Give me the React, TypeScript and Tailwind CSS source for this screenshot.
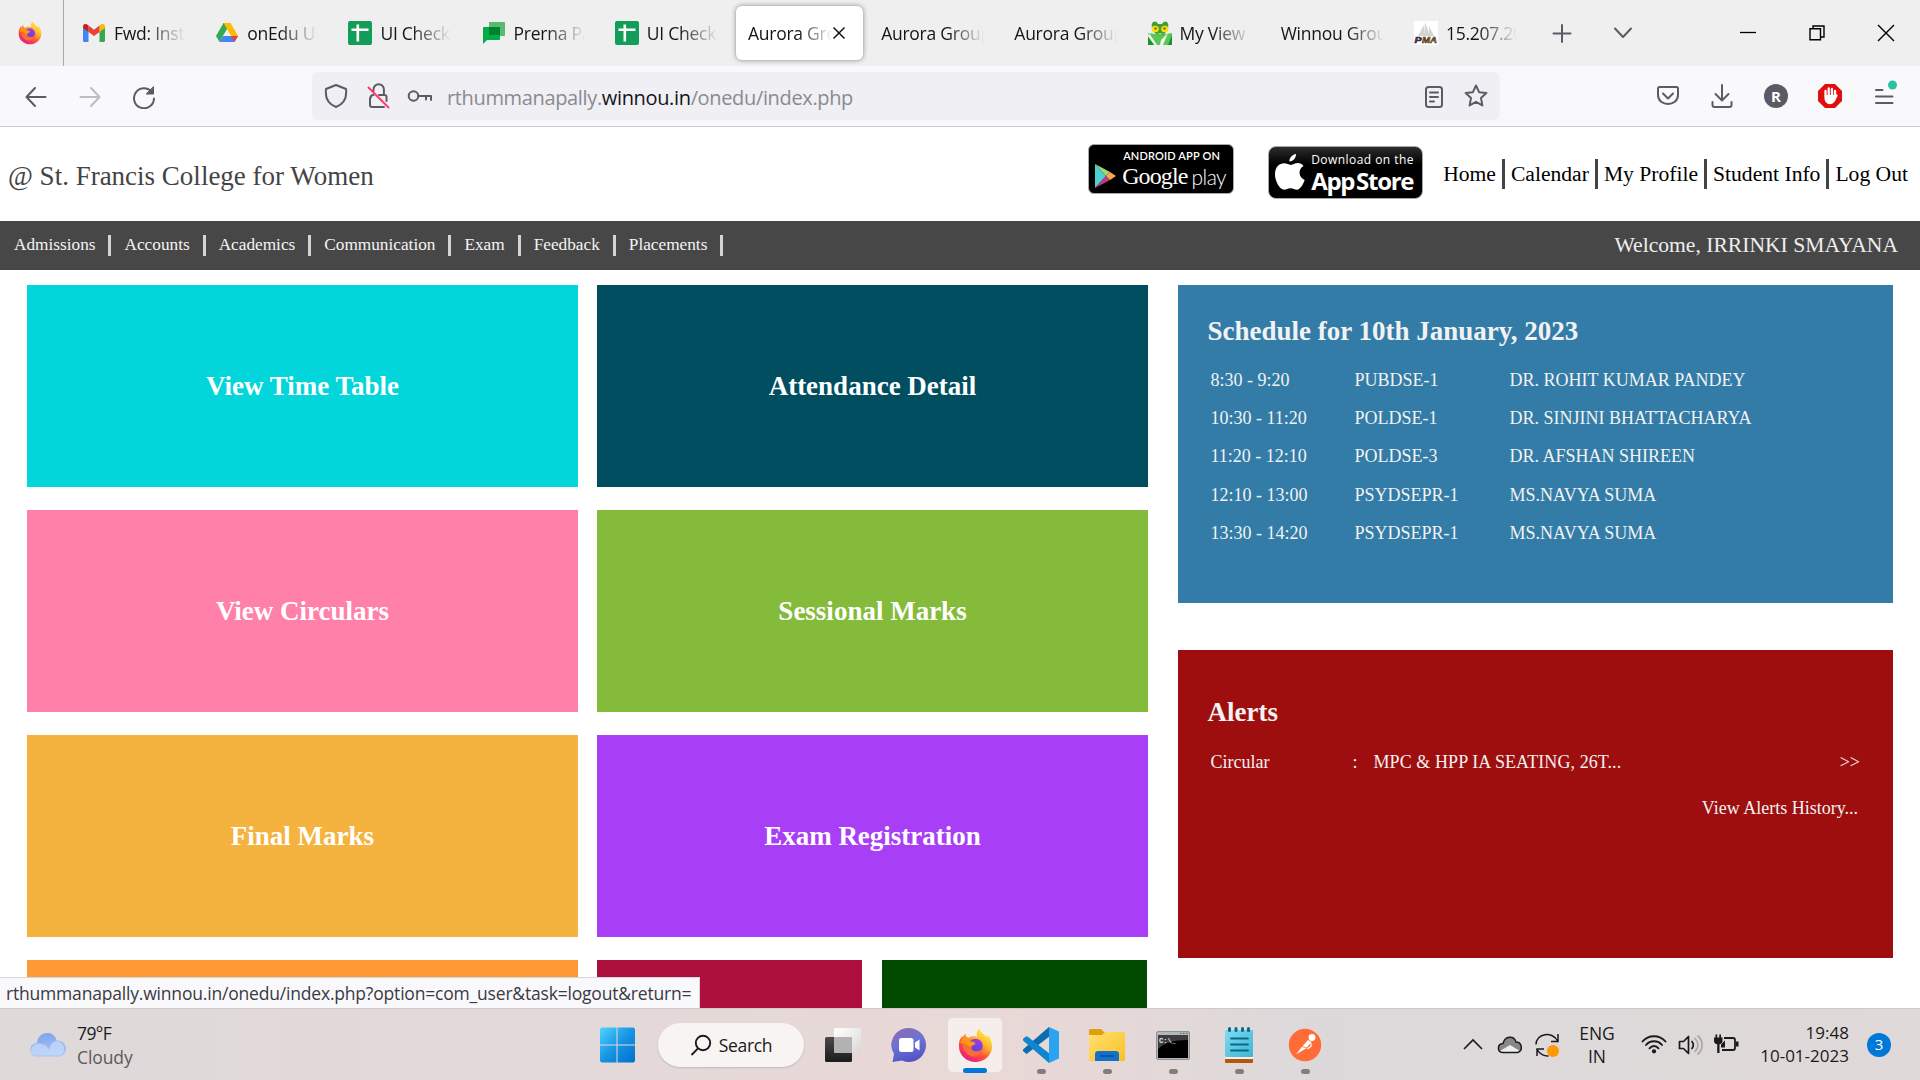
import type { ReactNode } from "react";

const UI = "font-['Open_Sans','Noto_Sans',sans-serif]";

function Firefox({ size, id }: { size: number; id: string }) {
  return (
    <svg width={size} height={size} viewBox="0 0 36 36" className="shrink-0">
      <defs>
        <linearGradient id={id + "a"} x1="0.85" y1="0.05" x2="0.25" y2="1">
          <stop offset="0" stopColor="#fff44f" />
          <stop offset="0.35" stopColor="#ffb330" />
          <stop offset="0.62" stopColor="#ff5634" />
          <stop offset="1" stopColor="#e31587" />
        </linearGradient>
        <linearGradient id={id + "b"} x1="0.8" y1="0" x2="0.3" y2="1">
          <stop offset="0" stopColor="#b833e1" />
          <stop offset="0.5" stopColor="#7542e5" />
          <stop offset="1" stopColor="#4a4fd0" />
        </linearGradient>
        <linearGradient id={id + "c"} x1="0.7" y1="0" x2="0.3" y2="1">
          <stop offset="0" stopColor="#fff44f" />
          <stop offset="0.5" stopColor="#ffc02a" />
          <stop offset="1" stopColor="#ff5a36" />
        </linearGradient>
      </defs>
      <path d="M22 1c-3 3-3 6-2 8-5-2-8 0-9 1-2 0-3-1-3-4-2 1-3 3-3 4-.3-.7-.5-1.400-.5-2C1 12 1 16 1 19c0 9 8 16 17 16s17-7 17-16c0-5-2-9-5-12 .5 1.500.7 2.500.7 3.500C28 7 24 6 22 1z" fill={"url(#" + id + "a)"} />
      <path d="M22 1c-3 3-3 6-2 8 5 1 9 6 8 12-1 4-4 7-8 8 8 0 14-6 14-13 0-3-1-6-4-9 .5 1.500.7 2.500.7 3.500C28 7 24 6 22 1z" fill={"url(#" + id + "c)"} />
      <circle cx="18" cy="18.500" r="7.500" fill={"url(#" + id + "b)"} />
      <path d="M5 15c3-2 6-1 8 0 2-.5 4 0 5 1-1 2-3 2-4 3-1 2 1 5 5 5 2 0 4-1 5-2-1 6-6 8-10 7-5-1-10-7-9-14z" fill="#ff6a3a" />
      <path d="M5 10c3 0 6 1 8 4 1 0 4 0 5 2-2 2-4 1-5 4-3-3-7-5-11-4z" fill="#ff980e" />
    </svg>
  );
}

function Gmail() {
  return (
    <svg width="24" height="24" viewBox="0 0 24 24">
      <path d="M1 6v13.500c0 .8.700 1.500 1.500 1.500H6.500V10.500z" fill="#4285f4" />
      <path d="M23 6v13.500c0 .8-.7 1.500-1.500 1.500H17.500V10.500z" fill="#34a853" />
      <path d="M17.500 4.500v6.500L23 7V5.500c0-2.300-2.500-3-4-2z" fill="#fbbc04" />
      <path d="M6.500 11V4.600L12 8.700l5.500-4.100V11L12 15z" fill="#ea4335" />
      <path d="M1 5.500V7l5.500 4V4.600L5 3.500c-1.500-1-4-.3-4 2z" fill="#c5221f" />
    </svg>
  );
}

function Drive() {
  return (
    <svg width="24" height="24" viewBox="0 0 24 24">
      <path d="M8.500 2h7l-4 7L4.500 21 1 15z" fill="#34a853" />
      <path d="M8.500 2h7L12 8z" fill="#188038" />
      <path d="M15.500 2L23 15h-7L8.500 2z" fill="#fbbc04" />
      <path d="M8 15h15l-3.500 6h-15z" fill="#4285f4" />
      <path d="M16 15h7l-3.500 6z" fill="#ea4335" />
      <path d="M12 8.500l4 6.500H8z" fill="#efeff0" />
    </svg>
  );
}

function Sheet() {
  return (
    <svg width="24" height="24" viewBox="0 0 24 24">
      <rect width="24" height="24" rx="2" fill="#129d58" />
      <path d="M3.500 8.700h17M9.800 3.500v17" stroke="#fff" strokeWidth="2.600" />
    </svg>
  );
}

function ChatIcon() {
  return (
    <svg width="24" height="24" viewBox="0 0 24 24">
      <path d="M7 1h15c.6 0 1 .4 1 1v12c0 .6-.4 1-1 1H7z" fill="#5bb974" />
      <path d="M2 6h15c.6 0 1 .4 1 1v11c0 .6-.4 1-1 1H5l-4 4V7c0-.6.400-1 1-1z" fill="#00ac47" />
      <path d="M7 6h11v8H8c-.6 0-1-.4-1-1z" fill="#00832d" />
    </svg>
  );
}

function Mantis() {
  return (
    <svg width="24" height="24" viewBox="0 0 24 24">
      <path d="M0 12l7 1 4-2h3l4 2 6-1v12H0z" fill="#5ec455" />
      <path d="M0 16l6 8H0zM24 14l-4 10h4z" fill="#17913a" />
      <path d="M1 12l8 12H6.500L0 15zM20 12l-5 12h-3l1-5z" fill="#e9fbe6" />
      <path d="M5 1c3-1.500 4 0 5 2h4c1-2 3-3.500 5-2 2 2 2 8-2 11l-5 3.500L7 12C3 9 3 3 5 1z" fill="#3f9f35" />
      <ellipse cx="7.200" cy="8" rx="3.600" ry="3.200" fill="#f5df17" />
      <ellipse cx="16.800" cy="8" rx="3.600" ry="3.200" fill="#f5df17" />
      <circle cx="7.500" cy="7.500" r="1.200" fill="#8a6a00" />
      <circle cx="16.500" cy="7.500" r="1.200" fill="#8a6a00" />
      <path d="M9 12h6l-3 3z" fill="#7fdc4d" />
    </svg>
  );
}

function Pma() {
  return (
    <svg width="24" height="24" viewBox="0 0 24 24">
      <rect width="24" height="24" fill="#fff" />
      <path d="M4 15L10 4v11zM10 15l1-14 5 14zM15 15V5l5 10z" fill="#d3d3d3" />
      <text x="0.500" y="22" fontSize="8.500" fontWeight="800" fontStyle="italic" fontFamily="Liberation Sans, sans-serif" textLength="7" lengthAdjust="spacingAndGlyphs" fill="#3b3f78" stroke="#222" strokeWidth="0.500">P</text>
      <text x="8" y="22" fontSize="8.500" fontWeight="800" fontStyle="italic" fontFamily="Liberation Sans, sans-serif" textLength="15" lengthAdjust="spacingAndGlyphs" fill="#e98a00" stroke="#222" strokeWidth="0.500">MA</text>
    </svg>
  );
}

type TabInfo = { icon?: ReactNode; label: string; active?: boolean };
const tabs: TabInfo[] = [
  { icon: <Gmail />, label: "Fwd: Inst" },
  { icon: <Drive />, label: "onEdu UI" },
  { icon: <Sheet />, label: "UI Check" },
  { icon: <ChatIcon />, label: "Prerna Pa" },
  { icon: <Sheet />, label: "UI Check" },
  { label: "Aurora Gro", active: true },
  { label: "Aurora Group" },
  { label: "Aurora Group" },
  { icon: <Mantis />, label: "My View" },
  { label: "Winnou Grou" },
  { icon: <Pma />, label: "15.207.20" },
];

function Tab({ icon, label, active }: TabInfo) {
  return (
    <div className="flex h-full w-[133.200px] shrink-0 items-center px-[3px]">
      <div className={active ? "flex h-[54px] w-full items-center rounded-[6px] bg-white pl-3 shadow-[0_0_5px_rgba(0,0,0,0.45)]" : "flex h-[54px] w-full items-center pl-3"}>
        {icon && <span className="mr-[8px] shrink-0">{icon}</span>}
        <span
          className={
            "shrink-0 overflow-hidden whitespace-nowrap text-[17.500px] tracking-[-0.250px] text-[#15141a] " +
            (active
              ? "w-[84px] [mask-image:linear-gradient(to_right,black_60%,transparent)]"
              : icon
                ? "w-[71px] [mask-image:linear-gradient(to_right,black_45%,transparent)]"
                : "w-[103px] [mask-image:linear-gradient(to_right,black_65%,transparent)]")
          }
        >
          {label}
        </span>
        {active && (
          <svg width="14" height="14" viewBox="0 0 14 14" className="shrink-0">
            <path d="M1.500 1.500l11 11M12.500 1.500l-11 11" stroke="#15141a" strokeWidth="1.500" />
          </svg>
        )}
      </div>
    </div>
  );
}

const ico = { fill: "none", stroke: "#5b5b66", strokeWidth: 2, strokeLinecap: "round" as const, strokeLinejoin: "round" as const };

function TabBar() {
  return (
    <div className="flex h-[66px] items-center bg-[#efeff0]">
      <div className="flex h-full w-16 items-center justify-center border-r border-[#a9a9ad] pr-[3px]">
        <Firefox size={24} id="ft" />
      </div>
      <div className="ml-[3px] flex h-full">
        {tabs.map((t, i) => (
          <Tab key={i} {...t} />
        ))}
      </div>
      <svg width="20" height="20" viewBox="0 0 20 20" className="ml-[20px] shrink-0" {...ico}><path d="M10 2v17M1.500 10.500h17" /></svg>
      <svg width="20" height="20" viewBox="0 0 20 20" className="ml-[41px] shrink-0" {...ico}><path d="M2 5.500l8 8.500 8-8.500" /></svg>
      <div className="ml-auto mr-[25px] flex items-center gap-[53px]">
        <svg width="16" height="16" viewBox="0 0 16 16"><path d="M0 7.500h16" stroke="#000" strokeWidth="1.300" /></svg>
        <svg width="16" height="16" viewBox="0 0 16 16" fill="none" stroke="#000" strokeWidth="1.400"><path d="M1 3.800h10.500v11H1zM4 3.500V1h11v11h-3" /></svg>
        <svg width="18" height="18" viewBox="0 0 18 18" className="-ml-px"><path d="M1 1l16 16M17 1L1 17" stroke="#000" strokeWidth="1.400" /></svg>
      </div>
    </div>
  );
}

function AddressBar() {
  return (
    <div className="flex h-[61px] items-center border-b border-[#ccccd1] bg-[#f9f9fb]">
      <div className="flex w-[312px] items-center pl-[24px] pt-px">
        <svg width="24" height="24" viewBox="0 0 24 24" {...ico}><path d="M21.500 12H2.500M11 3L2.500 12l8.500 9" /></svg>
        <svg width="24" height="24" viewBox="0 0 24 24" className="ml-[30px]" {...ico} stroke="#bdbdc2"><path d="M2.500 12h19M13 3l8.500 9-8.500 9" /></svg>
        <svg width="24" height="24" viewBox="0 0 24 24" className="ml-[30px]" {...ico}><path d="M20.500 8A10 10 0 1 0 22 13.500" /><path d="M21.500 2v7h-7z" fill="#5b5b66" stroke="#5b5b66" strokeWidth="1" /></svg>
      </div>
      <div className="flex h-12 w-[1188px] items-center rounded-[6px] bg-[#f0f0f4] pl-[12px] pr-[11px]">
        <svg width="24" height="26" viewBox="0 0 24 26" {...ico}><path d="M12 2l10 4c1 8-2 15-10 18C4 21 1 14 2 6z" /></svg>
        <svg width="24" height="26" viewBox="0 0 24 26" className="ml-[18px]" {...ico}><path d="M7.500 8V6.500a5.200 5.200 0 0 1 10.400 0V12M4.500 15c0-2 1-3 3-3M13 12h5.500c1.200 0 2 .8 2 2v4M4 15v7c0 1.200.8 2 2 2h12" /><path d="M2.500 4.500l20 20" stroke="#ff3b6b" /></svg>
        <svg width="26" height="16" viewBox="0 0 26 16" className="ml-[17px]" {...ico}><circle cx="6.500" cy="8" r="4.800" /><path d="M11.500 8H24v4M19 8v3.500" /></svg>
        <span className="ml-[14px] whitespace-nowrap pt-[3px] text-[20px] tracking-[-0.350px] text-[#8a8a90]">
          rthummanapally.<span className="text-[#15141a]">winnou.in</span>/onedu/index.php
        </span>
        <svg width="20" height="24" viewBox="0 0 20 24" className="ml-auto mt-px" {...ico}><rect x="2" y="2" width="16" height="20" rx="2.500" /><path d="M6 7.500h8M6 12h8M6 16.500h4" /></svg>
        <svg width="26" height="26" viewBox="0 0 26 26" className="ml-[19px]" {...ico}><path d="M13 2.500l3.100 6.700 7.300.9-5.400 5 1.400 7.300-6.400-3.600-6.400 3.600L8 15.100l-5.400-5 7.300-.9z" /></svg>
      </div>
      <div className="ml-auto mr-[23px] flex items-center">
        <svg width="24" height="24" viewBox="0 0 24 24" {...ico}><path d="M3.500 3h17c.8 0 1.500.7 1.500 1.500V11c0 12-20 12-20 0V4.500C2 3.700 2.700 3 3.500 3z" /><path d="M7 9.500l5 5 5-5" /></svg>
        <svg width="24" height="26" viewBox="0 0 24 26" className="mb-px ml-[30px]" {...ico}><path d="M12 2v15M5.500 11l6.500 6.500 6.500-6.500M2.500 19v3c0 1 .8 2 2 2h15c1.200 0 2-1 2-2v-3" /></svg>
        <span className="ml-[30px] flex h-6 w-6 items-center justify-center rounded-full bg-[#5b5b66] text-[15px] font-bold text-white">R</span>
        <svg width="26" height="26" viewBox="0 0 26 26" className="ml-[29px]">
          <path d="M8 1h10l7 7v10l-7 7H8l-7-7V8z" fill="#e40d0d" />
          <path d="M8.500 14V8M11.700 12V5.500M14.900 12V6M18 13V8M8.500 14c0 4 2 6 4.700 6 3 0 4-2 5-5l1.300-2.500" stroke="#fff" strokeWidth="2.300" strokeLinecap="round" fill="none" />
          <path d="M8 12h10v3c0 3-2 5-5 5s-5-2-5-5z" fill="#fff" />
        </svg>
        <svg width="24" height="30" viewBox="0 0 24 30" className="mb-[6px] ml-[30px]" {...ico}><path d="M3 12h6.500M3 18.500h16.500M3 25h16.500" /><circle cx="19.500" cy="7" r="4.500" fill="#2ac3a2" stroke="none" /></svg>
      </div>
    </div>
  );
}

function PlayBadge() {
  return (
    <div className="mb-[10px] flex h-[50px] w-[146px] items-center rounded-[6px] border border-[#aaa] bg-black pl-[5px] text-white">
      <svg width="23" height="26" viewBox="0 0 23 26" className="mt-[13px] shrink-0">
        <path d="M1 1v24l11-12z" fill="#4dd0d4" />
        <path d="M1 1l11 12 4-4z" fill="#a5d66f" />
        <path d="M1 25l11-12 4 4z" fill="#c2378c" />
        <path d="M12 13l4-4 6 4-6 4z" fill="#f6a94f" />
      </svg>
      <div className="flex flex-col pl-[5px]">
        <span className="whitespace-nowrap pl-px font-['Lato',sans-serif] text-[11px] font-semibold leading-[15px] tracking-[0.150px]">ANDROID APP ON</span>
        <span className="flex items-center whitespace-nowrap leading-[27px]">
          <span className="font-['Liberation_Serif',serif] text-[24px] tracking-[-0.900px]">Google</span>
          <span className="ml-[4px] font-['Lato',sans-serif] text-[21px] font-light tracking-[-0.500px]">play</span>
        </span>
      </div>
    </div>
  );
}

function AppStoreBadge() {
  return (
    <div className="mb-[4px] ml-[34px] flex h-[53px] w-[155px] items-center rounded-[8px] border border-[#a6a6a6] bg-[linear-gradient(#2c2c2c,#000_35%)] pl-[5px] text-white">
      <svg width="32" height="38" viewBox="0 0 32 38" className="shrink-0">
        <path d="M22 1c.3 3-2.500 7.500-6.600 7.600C15 5 18.500 1.400 22 1zM29.500 13c-6 3.500-4.800 11.500 1.200 14C29 32 26 36.500 23 36.700c-2.500.1-3.500-1.500-6.500-1.500s-4 1.500-6.300 1.500C5.500 36.500 1 28 1 21.500 1 14 5.500 10.300 10 10.300c2.800 0 4.800 1.600 6.800 1.600 1.800 0 4-1.800 7-1.800 2.200 0 4.500 1.200 5.700 2.900z" fill="#fff" />
      </svg>
      <div className="flex flex-col pl-[5px] font-['Open_Sans',sans-serif]">
        <span className="whitespace-nowrap text-[12px] leading-[17px] tracking-[0.450px]">Download on the</span>
        <span className="whitespace-nowrap text-[24px] font-bold leading-[25px] tracking-[-1.300px] [word-spacing:-3px]">App Store</span>
      </div>
    </div>
  );
}

const links = ["Home", "Calendar", "My Profile", "Student Info", "Log Out"];
const menu = ["Admissions", "Accounts", "Academics", "Communication", "Exam", "Feedback", "Placements"];

function SiteHeader() {
  return (
    <>
      <header className="flex h-[94px] items-center bg-white">
        <h1 className="ml-[8px] mt-[4px] text-[27px] leading-none text-[#444]">@ St. Francis College for Women</h1>
        <div className="ml-auto flex items-center">
          <PlayBadge />
          <AppStoreBadge />
        </div>
        <nav className="ml-[20px] mr-[12px] flex items-center">
          {links.map((l, i) => (
            <div key={l} className="flex items-center">
              {i > 0 && <span className="mx-[6px] h-[30px] w-[3px] bg-[#444]" />}
              <a className="whitespace-nowrap pt-[2px] text-[21.600px] leading-none text-black">{l}</a>
            </div>
          ))}
        </nav>
      </header>
      <div className="flex h-[49px] items-center bg-[#474747] pl-px text-[#f4f4f4]">
        {menu.map((m) => (
          <div key={m} className="flex items-center pb-px">
            <span className="ml-[13px] text-[17.250px] leading-none">{m}</span>
            <span className="ml-[13px] h-[21px] w-[3px] bg-[#d4d4d4]" />
          </div>
        ))}
        <span className="ml-auto mr-[22px] text-[21.600px] leading-none text-[#eee]">Welcome, IRRINKI SMAYANA</span>
      </div>
    </>
  );
}

const tiles = [
  { t: "View Time Table", c: "bg-[#02d6da]" },
  { t: "Attendance Detail", c: "bg-[#014e60]" },
  { t: "View Circulars", c: "bg-[#ff80a8]" },
  { t: "Sessional Marks", c: "bg-[#84bb3a]" },
  { t: "Final Marks", c: "bg-[#f4b33f]" },
  { t: "Exam Registration", c: "bg-[#a83ef6]" },
];

const schedule = [
  ["8:30 - 9:20", "PUBDSE-1", "DR. ROHIT KUMAR PANDEY"],
  ["10:30 - 11:20", "POLDSE-1", "DR. SINJINI BHATTACHARYA"],
  ["11:20 - 12:10", "POLDSE-3", "DR. AFSHAN SHIREEN"],
  ["12:10 - 13:00", "PSYDSEPR-1", "MS.NAVYA SUMA"],
  ["13:30 - 14:20", "PSYDSEPR-1", "MS.NAVYA SUMA"],
];

function Dashboard() {
  return (
    <main className="flex h-[738px] overflow-hidden bg-white pl-[27px] pt-[15px]">
      <div className="w-[1121px] shrink-0">
        <div className="grid grid-cols-[551px_551px] gap-x-[19px] gap-y-[23px]">
          {tiles.map((x) => (
            <div key={x.t} className={"flex h-[202px] items-center justify-center text-[27px] font-bold text-white " + x.c}>{x.t}</div>
          ))}
        </div>
        <div className="mt-[23px] flex">
          <div className="h-[202px] w-[551px] bg-[#ff9933]" />
          <div className="ml-[19px] h-[202px] w-[265px] bg-[#ad103c]" />
          <div className="ml-[20px] h-[202px] w-[265px] bg-[#004b00]" />
        </div>
      </div>
      <div className="ml-[30px] w-[715px] text-[#f2f2f2]">
        <section className="h-[318px] bg-[#327ca7] pl-[29.500px] pt-[31px]">
          <h2 className="text-[27px] font-bold leading-[31px]">Schedule for 10th January, 2023</h2>
          <div className="mt-[14px] pl-[3px] text-[18px]">
            {schedule.map((r, i) => (
              <div key={i} className="grid h-[38.400px] grid-cols-[144px_155px_1fr] items-center">
                <span>{r[0]}</span>
                <span>{r[1]}</span>
                <span>{r[2]}</span>
              </div>
            ))}
          </div>
        </section>
        <section className="mt-[47px] h-[308px] bg-[#9e0e0e] pl-[29.500px] pr-[33px] pt-[47px]">
          <h2 className="text-[27px] font-bold leading-[31px]">Alerts</h2>
          <div className="mt-[19px] flex h-[30px] items-center pl-[3px] text-[18px]">
            <span className="w-[142px]">Circular</span>
            <span className="w-[21px]">:</span>
            <span className="tracking-[0.080px]">MPC &amp; HPP IA SEATING, 26T...</span>
            <span className="ml-auto">&gt;&gt;</span>
          </div>
          <div className="mt-[16px] flex h-[30px] items-center justify-end pr-[2px] text-[18px]">View Alerts History...</div>
        </section>
      </div>
    </main>
  );
}

function WinLogo() {
  return (
    <svg width="36" height="36" viewBox="0 0 36 36" className="shrink-0">
      <defs>
        <linearGradient id="win" x1="0" y1="0" x2="1" y2="1">
          <stop offset="0" stopColor="#4fd4ff" />
          <stop offset="0.5" stopColor="#1795e3" />
          <stop offset="1" stopColor="#0070cc" />
        </linearGradient>
      </defs>
      <path d="M1.500 0.500h15v17H0V2zM17.500 0.500H33.500L35 2v15.500H17.500zM0 18.500h16.500v17h-15L0 34zM17.500 18.500H35V34l-1.500 1.500h-16z" fill="url(#win)" />
    </svg>
  );
}

function TaskView() {
  return (
    <svg width="36" height="36" viewBox="0 0 36 36">
      <defs>
        <linearGradient id="tv" x1="0" y1="0" x2="0" y2="1"><stop offset="0" stopColor="#4a4a4a" /><stop offset="1" stopColor="#1c1c1c" /></linearGradient>
        <linearGradient id="tw" x1="0" y1="0" x2="1" y2="1"><stop offset="0" stopColor="#fff" /><stop offset="1" stopColor="#d8d8d8" /></linearGradient>
      </defs>
      <rect x="0" y="10" width="27" height="25" rx="1.500" fill="url(#tv)" />
      <rect x="9" y="1" width="27" height="25" rx="1.500" fill="url(#tw)" />
      <path d="M9 10h18v16H10.500L9 24.500z" fill="#b2b2b2" />
    </svg>
  );
}

function TeamsChat() {
  return (
    <svg width="36" height="36" viewBox="0 0 36 36">
      <defs><linearGradient id="tc" x1="0.300" y1="0" x2="0.600" y2="1"><stop offset="0" stopColor="#8a6bb5" /><stop offset="0.450" stopColor="#6a74d4" /><stop offset="1" stopColor="#5350c6" /></linearGradient></defs>
      <path d="M18 1a17 17 0 1 1-7 32.500L1.500 35l1.500-8A17 17 0 0 1 18 1z" fill="url(#tc)" />
      <rect x="8" y="11" width="14.500" height="14" rx="2.500" fill="#fff" />
      <path d="M24 15.500l4.500-3v11l-4.500-3z" fill="#fff" />
    </svg>
  );
}

function VsCode() {
  return (
    <svg width="36" height="36" viewBox="0 0 36 36">
      <path d="M26 0L27 9 3.500 27 0.500 24.500c-.8-.8-.8-1.800 0-2.600z" fill="#0b6cae" />
      <path d="M0.500 11.500l2-1.700c.8-.6 1.600-.5 2.300 0L27 27l-1 9L0.500 14c-.8-.8-.8-1.700 0-2.500z" fill="#0f86cf" />
      <path d="M26 0l10 4.500v27L26 36z" fill="#2aa4f0" />
    </svg>
  );
}

function Folder() {
  return (
    <svg width="36" height="34" viewBox="0 0 36 34">
      <defs><linearGradient id="fo" x1="0" y1="0" x2="1" y2="1"><stop offset="0" stopColor="#ffe074" /><stop offset="1" stopColor="#fcc120" /></linearGradient></defs>
      <path d="M1.500 1H12l3 3H34c1 0 2 1 2 2v6H0V2.500C0 1.600.600 1 1.500 1z" fill="#dfa00b" />
      <path d="M0 7h13l3-3h18c1 0 2 .8 2 2v27H0z" fill="url(#fo)" />
      <path d="M6 33V26c0-2 1.500-3 3-3h18c1.500 0 3 1 3 3v7z" fill="#1370cc" />
      <path d="M11 28h14" stroke="#0a4c95" strokeWidth="1.500" />
    </svg>
  );
}

function Terminal() {
  return (
    <svg width="34" height="29" viewBox="0 0 34 29">
      <rect x="0.500" y="0.500" width="33" height="28" rx="1.500" fill="#b4b8bc" stroke="#8d9195" />
      <rect x="2" y="4" width="30" height="23" fill="#000" />
      <path d="M2 4h30v5C18 9 8 12 2 18z" fill="#3d3d3d" />
      <text x="3" y="11.500" fontSize="7" fontWeight="700" fill="#eee" fontFamily="Liberation Mono, monospace">C:\_</text>
      <path d="M24 2.300h1.500M27 2.300h1.500M30 2.300h1.500" stroke="#555" />
    </svg>
  );
}

function Notepad() {
  return (
    <svg width="28" height="36" viewBox="0 0 28 36">
      <defs><linearGradient id="np" x1="0" y1="0" x2="1" y2="1"><stop offset="0" stopColor="#7fdcf0" /><stop offset="1" stopColor="#3fb3d4" /></linearGradient></defs>
      <rect y="31" width="28" height="5" rx="1" fill="#b4560c" />
      <rect y="28" width="28" height="4" fill="#f4f0ec" />
      <rect y="3" width="28" height="27" rx="1" fill="url(#np)" />
      <path d="M6 11.500h17M6 17.500h17M6 23.500h17" stroke="#076a87" strokeWidth="1.800" strokeLinecap="round" />
      <path d="M4.500 1.500v2M11 1.500v2M17.500 1.500v2M23.500 1.500v2" stroke="#076a87" strokeWidth="3" strokeLinecap="round" />
    </svg>
  );
}

function Postman() {
  return (
    <svg width="34" height="34" viewBox="0 0 34 34">
      <circle cx="17" cy="17" r="16.200" fill="#ff6c37" />
      <circle cx="24" cy="9.500" r="3.400" fill="#fff" />
      <path d="M20 12l3.500 2-5.500 6.500L8 26.500 13 20z" fill="#fff" />
      <path d="M22.500 14l.8 4-3.800 3" stroke="#fff" fill="none" strokeWidth="1.200" />
      <path d="M14 18.500l5 1.500" stroke="#ff6c37" strokeWidth="0.800" />
    </svg>
  );
}

function AppSlot({ children, active }: { children: ReactNode; active?: boolean }) {
  return (
    <div className={"relative flex h-14 w-14 items-center justify-center " + (active ? "rounded-[6px] border border-[#e6dcdb] bg-[#f5eeed]" : "")}>
      {children}
      <span className={active ? "absolute bottom-[-1px] h-[5px] w-6 rounded-full bg-[#0078d7]" : "absolute bottom-[-1px] h-[5px] w-[9px] rounded-full bg-[#857d7d]"} />
    </div>
  );
}

function Taskbar() {
  return (
    <footer className={"flex h-[72px] items-center border-t border-[#cfc7c8] bg-[linear-gradient(90deg,#dfd9da_0%,#e3d9d9_30%,#e9d8d6_52%,#ddd9da_68%,#dfd9d9_100%)] pt-px text-[#1b1a1a] " + UI}>
      <div className="flex w-[600px] shrink-0 items-center pl-[29px]">
        <svg width="38" height="26" viewBox="0 0 38 26">
          <defs><linearGradient id="cl" x1="0" y1="0" x2="0.300" y2="1"><stop offset="0" stopColor="#7a9eea" /><stop offset="1" stopColor="#a8c4f5" /></linearGradient></defs>
          <path d="M7 24.500C-1 23 0 11.500 8 11 9-2 26-2 27.500 8.500 39 8 40 23 31 24.500z" fill="url(#cl)" />
          <path d="M2 19c0-6 6-9 11-7 5 1 6 4 7 6 1-5 3-8 7-9 8-1 11 10 5 14.500H6c-3-.5-4-2.500-4-4.500z" fill="#c6dafa" opacity="0.750" />
        </svg>
        <div className="ml-[10px] text-[17.500px] leading-[24px] tracking-[-0.100px]">
          <div className="tracking-[-0.600px]">79°F</div>
          <div className="text-[#5e5a5a]">Cloudy</div>
        </div>
      </div>
      <WinLogo />
      <div className="ml-[22px] flex h-11 w-[146px] shrink-0 items-center justify-center gap-[7px] rounded-full bg-[#f7f4f3] shadow-[0_1px_2px_rgba(0,0,0,0.15)]">
        <svg width="22" height="22" viewBox="0 0 22 22"><circle cx="13" cy="9" r="7.200" fill="none" stroke="#1b1a1a" strokeWidth="1.900" /><path d="M8 14.300L1.500 21" stroke="#1b1a1a" strokeWidth="1.900" /></svg>
        <span className="text-[17.500px] tracking-[-0.300px]">Search</span>
      </div>
      <div className="ml-[21px] flex items-center gap-[30px]">
        <TaskView />
        <TeamsChat />
      </div>
      <div className="ml-[20px] flex items-center gap-[10px]">
        <AppSlot active><Firefox size={35} id="fb" /></AppSlot>
        <AppSlot><VsCode /></AppSlot>
        <AppSlot><Folder /></AppSlot>
        <AppSlot><Terminal /></AppSlot>
        <AppSlot><Notepad /></AppSlot>
        <AppSlot><Postman /></AppSlot>
      </div>
      <div className="ml-auto mr-[29px] flex items-center">
        <svg width="20" height="12" viewBox="0 0 20 12" className="mb-[3px]"><path d="M1 11l9-9 9 9" fill="none" stroke="#1b1a1a" strokeWidth="1.600" /></svg>
        <svg width="26" height="18" viewBox="0 0 26 18" className="mb-px ml-[14px]">
          <path d="M5.500 16.500C0 16 0 8 6 7.500 8-.5 17-.5 19 6c6 0 7.500 9 1.500 10.500z" fill="#888" />
          <path d="M3 15l10-6 10 6-2 1.500H6z" fill="#eee" />
          <path d="M5.500 16.500C0 16 0 8 6 7.500 8-.5 17-.5 19 6c6 0 7.500 9 1.500 10.500z" fill="none" stroke="#1b1a1a" strokeWidth="1.500" />
        </svg>
        <svg width="26" height="26" viewBox="0 0 26 26" className="mb-px ml-[11px]">
          <path d="M2 12.500C2 1 19 -1 23.500 9M24 2v7.500h-7M3 24v-7h7M3.500 18c2 4 7 6.500 11 6" fill="none" stroke="#1b1a1a" strokeWidth="1.500" />
          <circle cx="19" cy="19" r="6" fill="#ff9800" />
        </svg>
        <div className="ml-[16px] w-[42px] text-center text-[17.500px] leading-[23px] tracking-[-0.100px]">ENG<br />IN</div>
        <svg width="26" height="20" viewBox="0 0 26 20" className="mb-[2px] ml-[23px]" fill="none" stroke="#1b1a1a" strokeWidth="1.900" strokeLinecap="round"><path d="M1.500 7.500c6-7 17-7 23 0M5 11c4-5 12-5 16 0M8.500 14.300c2.500-3 6.500-3 9 0" /><circle cx="13" cy="17.300" r="1.200" fill="#1b1a1a" /></svg>
        <svg width="25" height="22" viewBox="0 0 25 22" className="mb-px ml-[11px]" fill="none" stroke="#1b1a1a" strokeWidth="1.700" strokeLinejoin="round" strokeLinecap="round"><path d="M1.500 7.500h4l5-5v17l-5-5h-4zM14 7.500c1.500 2 1.500 5 0 7" /><path d="M17 4.500c4 4 4 9 0 13M20 2c5.500 5 5.500 13 0 18" stroke="#aaa5a5" /></svg>
        <svg width="26" height="22" viewBox="0 0 26 22" className="mb-[2px] ml-[10px]"><path d="M11 5h9c1 0 2 1 2 2v8c0 1-1 2-2 2H9" fill="none" stroke="#1b1a1a" strokeWidth="1.800" /><path d="M23 8.500h2.500v5H23zM1 4.500h8.500V8c0 2-1.500 3-3 3.300V20H4.200v-8.700C2.500 11 1 10 1 8zM2.500 1.500h1.700V5H2.500zM6.300 1.500H8V5H6.300zM12 7.500v7H8v-3z" fill="#1b1a1a" /></svg>
        <div className="mb-[2px] ml-[18px] w-[92px] whitespace-nowrap text-right text-[17px] leading-[23px] tracking-[0.010px]">19:48<br />10-01-2023</div>
        <span className="mb-px ml-[18px] flex h-6 w-6 items-center justify-center rounded-full bg-[#0078d7] text-[15px] text-white">3</span>
      </div>
    </footer>
  );
}

export default function App() {
  return (
    <div className="relative h-[1080px] w-[1920px] overflow-hidden bg-white font-['Liberation_Serif','Times_New_Roman',serif]">
      <div className={UI}>
        <TabBar />
        <AddressBar />
      </div>
      <SiteHeader />
      <Dashboard />
      <div className={"absolute left-0 top-[977px] flex h-[31px] w-[700px] items-center border-r border-t border-[#d5d5da] bg-[#f9f9fb] pl-[6px] pt-px text-[17.500px] tracking-[-0.190px] text-[#3a3944] " + UI}>
        rthummanapally.winnou.in/onedu/index.php?option=com_user&amp;task=logout&amp;return=
      </div>
      <Taskbar />
    </div>
  );
}
